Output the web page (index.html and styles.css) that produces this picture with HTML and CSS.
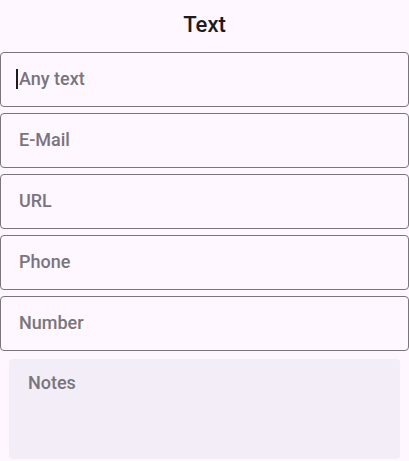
FILE: index.html
```html
<!DOCTYPE html>
<html>
<head>
<meta charset="utf-8">
<link rel="stylesheet" href="styles.css">
</head>
<body>
<div class="page">
  <h1 class="title">Text</h1>
  <div class="field"><span class="caret"></span><span class="hint">Any text</span></div>
  <div class="field"><span class="hint">E-Mail</span></div>
  <div class="field"><span class="hint">URL</span></div>
  <div class="field"><span class="hint">Phone</span></div>
  <div class="field"><span class="hint">Number</span></div>
  <div class="notes"><span class="hint">Notes</span></div>
</div>
</body>
</html>
```
FILE: styles.css
```css
html, body {
  margin: 0;
  padding: 0;
  background: #FEF7FF;
}
.page {
  display: flex;
  flex-direction: column;
  font-family: Roboto, "Noto Sans", sans-serif;
}
.title {
  margin: 0;
  height: 52px;
  line-height: 50px;
  text-align: center;
  font-size: 22px;
  font-weight: 500;
  color: #1D1B20;
}
.field {
  box-sizing: border-box;
  height: 55px;
  border: 1px solid #79747E;
  border-radius: 4px;
  margin-bottom: 6px;
  display: flex;
  align-items: center;
  padding-left: 18px;
  padding-bottom: 2px;
}
.field:nth-of-type(5) {
  margin-bottom: 8px;
}
.hint {
  font-size: 18px;
  font-weight: 500;
  color: #79747E;
}
.caret {
  width: 2px;
  height: 20px;
  background: #1D1B20;
  margin-left: -3px;
  margin-right: 1px;
}
.notes {
  box-sizing: border-box;
  height: 100px;
  margin: 0 9px;
  border-radius: 4px;
  background: #F2EDF6;
  padding: 13px 19px;
}
```
